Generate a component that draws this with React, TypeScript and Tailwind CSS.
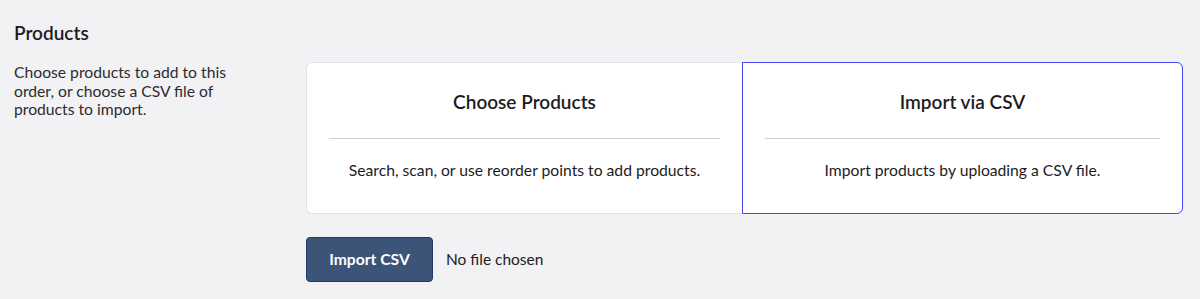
export default function App() {
  return (
    <div className="min-h-[299px] w-[1200px] bg-[#f2f1f4] pl-[14px] pt-[21px] font-['Lato','Liberation_Sans',sans-serif] text-[#1c1c1e]">
      <h2 className="text-[19px] font-semibold leading-6">Products</h2>
      <div className="mt-[17px] flex">
        <p className="w-[235px] pt-[1px] text-[15.7px] leading-[18.5px] text-[#2c2c2f]">
          Choose products to add to this order, or choose a CSV file of products to import.
        </p>
        <div className="ml-[57px] flex flex-col">
          <div className="grid w-[877px] grid-cols-[436px_1fr]">
            <button className="flex h-[152px] flex-col rounded-l-md border border-r-0 border-[#e2e1e6] bg-white px-[22px] text-center">
              <div className="flex h-[75px] items-center justify-center pt-[3px] text-[19px] font-semibold">
                Choose Products
              </div>
              <div className="flex flex-1 items-center justify-center border-t border-[#cfcfd4] pb-[11px] text-[15.7px]">
                Search, scan, or use reorder points to add products.
              </div>
            </button>
            <button className="flex h-[152px] flex-col rounded-r-md border border-[#4646f2] bg-white px-[22px] text-center">
              <div className="flex h-[75px] items-center justify-center pt-[3px] text-[19px] font-semibold">
                Import via CSV
              </div>
              <div className="flex flex-1 items-center justify-center border-t border-[#cfcfd4] pb-[11px] text-[15.7px]">
                Import products by uploading a CSV file.
              </div>
            </button>
          </div>
          <div className="mt-[23px] flex items-center gap-[13px]">
            <button className="h-[45px] w-[127px] rounded border border-[#1e3a68] bg-[#3b5478] text-[15.7px] font-bold text-white">
              Import CSV
            </button>
            <span className="text-[15.5px] text-[#222]">No file chosen</span>
          </div>
        </div>
      </div>
    </div>
  )
}
